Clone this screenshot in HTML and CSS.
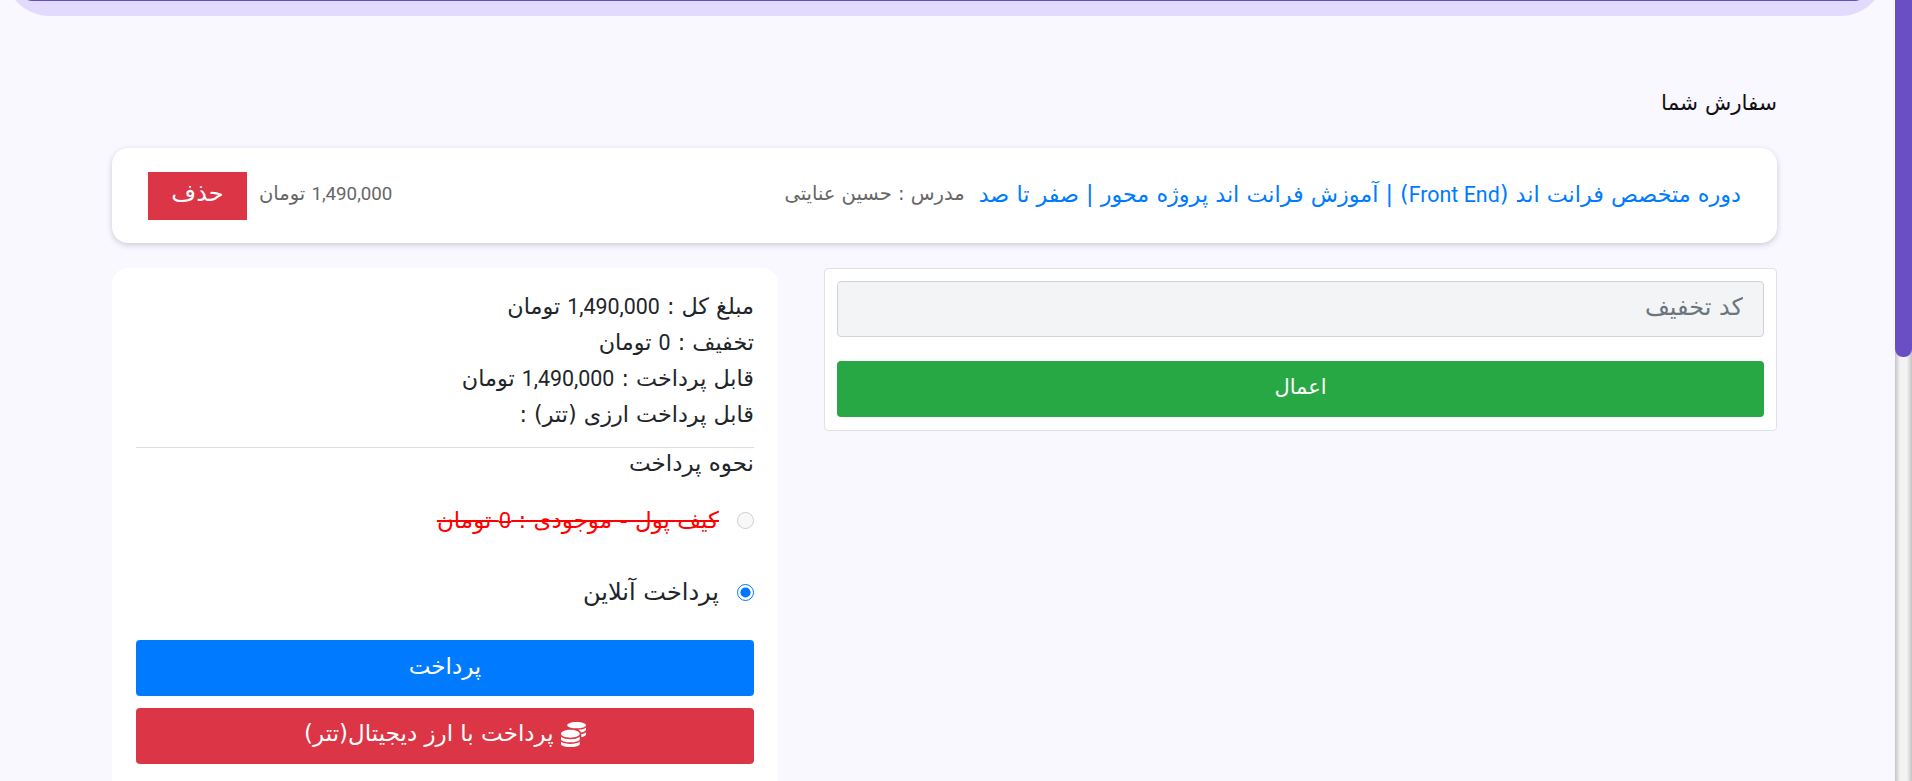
FILE: index.html
```html
<!DOCTYPE html>
<html lang="fa" dir="rtl">
<head>
  <meta charset="UTF-8" />
  <title>سفارش شما</title>
  <link rel="stylesheet" href="styles.css">
</head>
<body>
  <div class="scrollbar"><div class="thumb"></div></div>
  <div class="page">
    <div class="hero"><div class="hero-inner"></div></div>
    <main class="container">
      <h6 class="title">سفارش شما</h6>
      <div class="order-card">
        <div class="order-info">
          <a class="course-link" href="#">دوره متخصص فرانت اند (<span class="num">Front End</span>) | آموزش فرانت اند پروژه محور | صفر تا صد</a>
          <span class="teacher">مدرس : حسین عنایتی</span>
        </div>
        <div class="order-actions">
          <span class="price"><span class="num">1,490,000</span> تومان</span>
          <button class="btn btn-red btn-delete">حذف</button>
        </div>
      </div>
      <div class="columns">
        <div class="coupon">
          <input class="coupon-input" placeholder="کد تخفیف" />
          <button class="btn btn-green btn-block">اعمال</button>
        </div>
        <div class="summary">
          <p>مبلغ کل : <span class="num">1,490,000</span> تومان</p>
          <p>تخفیف : <span class="num">0</span> تومان</p>
          <p>قابل پرداخت : <span class="num">1,490,000</span> تومان</p>
          <p>قابل پرداخت ارزی (تتر) :</p>
          <hr />
          <p class="pay-title">نحوه پرداخت</p>
          <label class="pay-option disabled"><input type="radio" name="pay" disabled /><s>کیف پول - موجودی : <span class="num">0</span> تومان</s></label>
          <label class="pay-option"><input type="radio" name="pay" checked /><span>پرداخت آنلاین</span></label>
          <button class="btn btn-blue btn-block">پرداخت</button>
          <button class="btn btn-red btn-block btn-crypto">
            <svg class="coins" viewBox="0 0 512 512" width="25" height="25" fill="#fff"><path d="M0 405.300V448c0 35.300 86 64 192 64s192-28.700 192-64v-42.700C342.700 434.400 267.200 448 192 448S41.300 434.400 0 405.300zM320 128c106 0 192-28.700 192-64S426 0 320 0 128 28.700 128 64s86 64 192 64zM0 300.400V352c0 35.300 86 64 192 64s192-28.700 192-64v-51.600c-41.300 34-116.900 51.600-192 51.600S41.300 334.400 0 300.400zm416 11c57.300-11.100 96-31.700 96-55.400v-42.700c-23.200 16.400-57.300 27.600-96 34.500v63.600zM192 160C86 160 0 195.800 0 240s86 80 192 80 192-35.800 192-80-86-80-192-80zm219.300 56.300c60-10.800 100.700-32 100.700-56.300v-42.700c-35.500 25.100-96.500 38.600-160.700 41.800 29.500 14.300 51.200 33.500 60 57.200z"/></svg>
            پرداخت با ارز دیجیتال(تتر)
          </button>
        </div>
      </div>
    </main>
  </div>
</body>
</html>
```

FILE: styles.css
```css
* { box-sizing: border-box; }
html, body { margin: 0; height: 781px; overflow: hidden; }
body { display: flex; flex-direction: row-reverse; justify-content: flex-end; direction: ltr; background: #f9f7ff; font-family: "DejaVu Sans", sans-serif; color: #212529; font-size: 18px; }
.num { font-family: Roboto, sans-serif; font-size: .96em; line-height: 1; }
.page { direction: rtl; width: 1895px; flex: none; }
.hero { height: 76px; margin: -60px 9px 0 4px; background: #e2dbfd; border-radius: 0 0 46px 46px; }
.hero-inner { height: 61px; margin: 0 21px 0 18px; background: #6a4fc4; border-radius: 0 0 10px 10px; }
.container { padding: 73px 118px 0 112px; }
.title { margin: 0 0 31px 0; font-size: 21.5px; font-weight: 400; line-height: 28px; color: #111; }
.order-card { display: flex; justify-content: space-between; align-items: center; height: 95px; padding: 0 36px; background: #fff; border-radius: 16px; box-shadow: 0 2px 6px rgba(0,0,0,.18); }
.order-info { display: flex; align-items: center; gap: 14px; padding-bottom: 4px; }
.course-link { color: #007bff; text-decoration: none; font-size: 22.3px; }
.teacher { color: #666; font-size: 19.5px; }
.order-actions { display: flex; align-items: center; gap: 12px; }
.price { color: #666; font-size: 19.5px; padding-bottom: 4px; }
.btn { border: 0; color: #fff; font-family: inherit; font-size: 23px; border-radius: 4px; padding: 0 0 5px; }
.btn-red { background: #dc3545; }
.btn-green { background: #28a745; font-size: 21px; }
.btn-blue { background: #007bff; }
.btn-block { display: block; width: 100%; height: 56px; }
.btn-delete { width: 99px; height: 48px; border-radius: 0; font-size: 24px; }
.columns { display: flex; gap: 46px; margin-top: 25px; align-items: flex-start; }
.coupon { flex: 0 0 953px; height: 163px; padding: 12px; background: #fff; border: 1px solid #dee2e6; border-radius: 4px; }
.coupon-input { display: block; width: 100%; height: 56px; margin-bottom: 24px; padding: 0 20px 4px; background: #f2f4f6; border: 1px solid #ced4da; border-radius: 4px; font-family: inherit; font-size: 24px; }
.coupon-input::placeholder { color: #6c757d; }
.summary { flex: 0 0 666px; height: 600px; padding: 20px 24px 0; background: #fff; border-radius: 16px; }
.summary p { margin: 0; font-size: 22.3px; line-height: 36px; }
.summary hr { margin: 15px 0 0; border: 0; border-top: 1px solid #ddd; }
.summary .pay-title { font-size: 23px; line-height: 30px; margin-bottom: 6px; }
.pay-option { display: flex; align-items: center; gap: 18px; height: 72px; font-size: 24px; }
.pay-option input { width: 17px; height: 17px; margin: 0; }
.pay-option.disabled s { color: #f00; font-size: 23px; }
.btn-blue { margin-top: 12px; }
.btn-crypto { margin-top: 12px; }
.coins { vertical-align: middle; }
.scrollbar { width: 17px; flex: none; height: 781px; background: linear-gradient(90deg, #c4c4c4, #f3f3f3 30%, #f3f3f3 70%, #c4c4c4); }
.thumb { height: 357px; background: #6a4fc4; border-radius: 0 0 8px 8px; }
```
